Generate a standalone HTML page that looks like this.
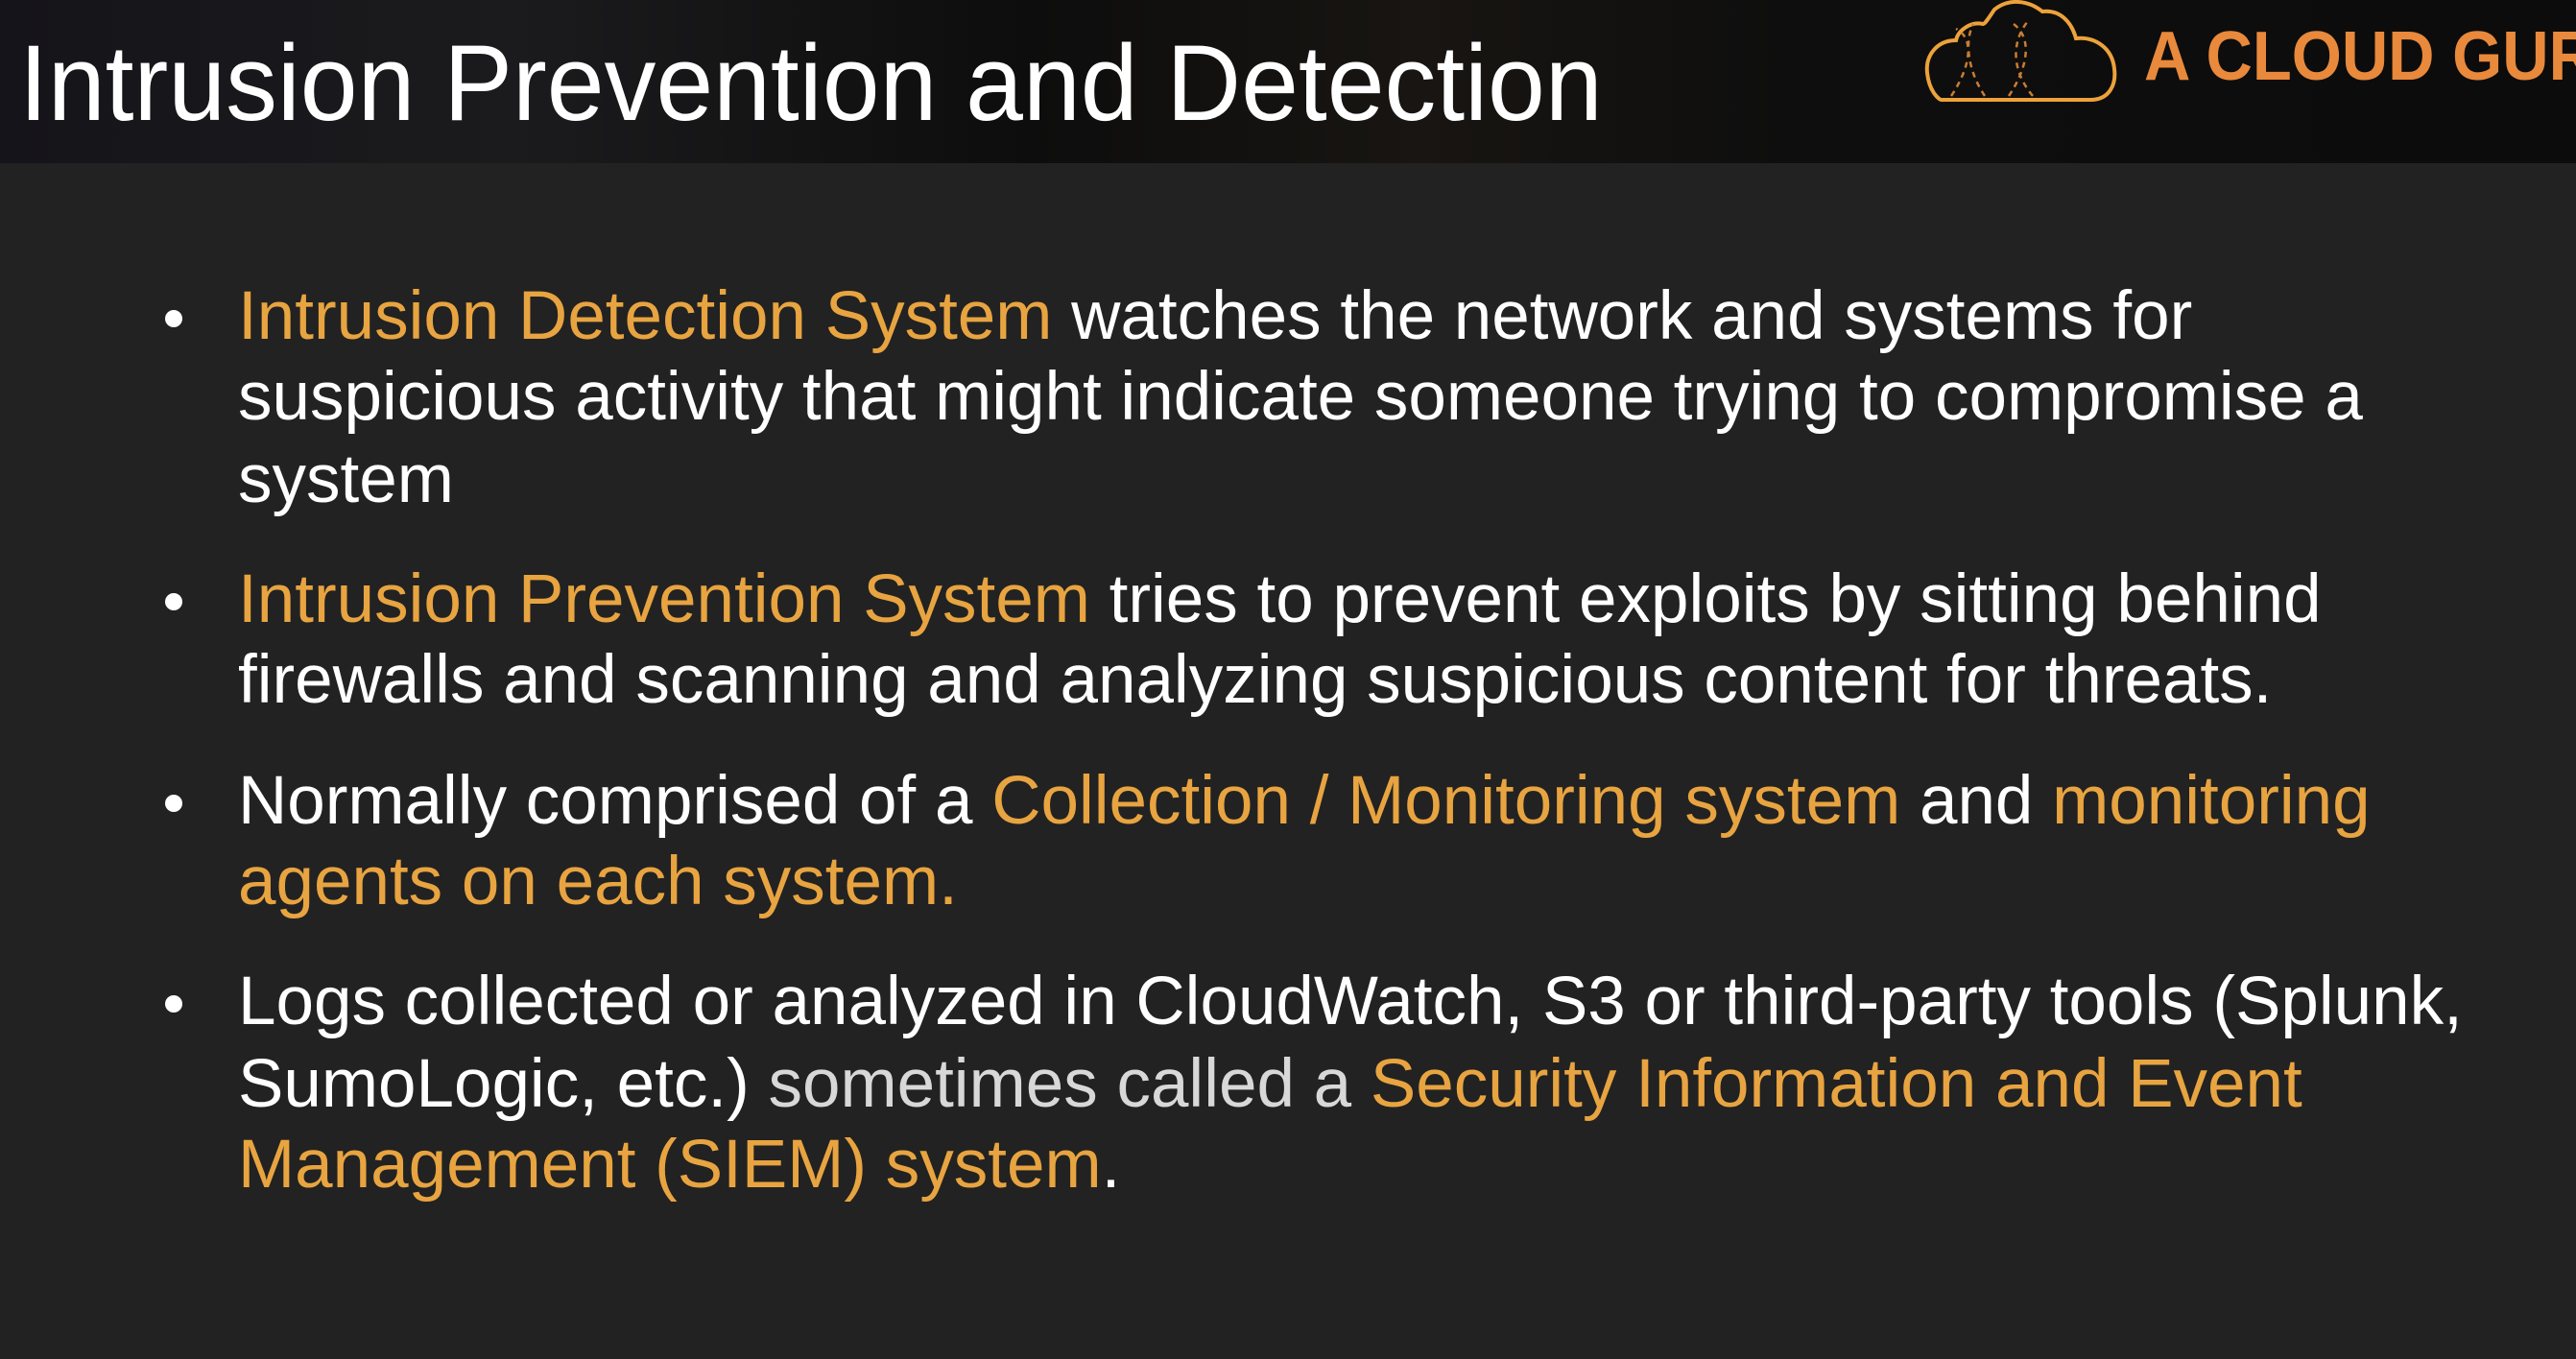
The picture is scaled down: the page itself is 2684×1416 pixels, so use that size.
<!DOCTYPE html>
<html><head><meta charset="utf-8"><style>
html,body{margin:0;padding:0;}
body{width:2684px;height:1416px;background:#222222;position:relative;overflow:hidden;font-family:"Liberation Sans",sans-serif;}
#hdr{position:absolute;left:0;top:0;width:2684px;height:170px;background:linear-gradient(90deg,#15141a 0%,#1b1b1d 20%,#0d0d0d 40%,#181512 55%,#0e0e0e 70%,#0c0c0c 100%);}
#title{position:absolute;left:20px;top:22px;font-size:112px;color:#fff;white-space:nowrap;transform-origin:0 0;transform:scaleX(0.96);line-height:130px;}
#brand{position:absolute;left:2234px;top:14px;font-size:72px;font-weight:bold;color:#e8893c;white-space:nowrap;line-height:90px;transform-origin:0 0;transform:scaleX(0.93);}
.l{position:absolute;left:248px;font-size:71px;color:#fff;white-space:nowrap;line-height:84px;transform-origin:0 0;}
.o{color:#e8a440;}
.g{color:#d8d8d8;}
.b{position:absolute;left:172px;width:18px;height:18px;border-radius:50%;background:#fff;}
</style></head><body>
<div id="hdr"></div>
<div id="title">Intrusion Prevention and Detection</div>
<svg style="position:absolute;left:1998px;top:0" width="210" height="110" viewBox="0 0 210 110">
<path d="M25 104 H180 C200 104 207 88 205 72 C203 50 185 38 165 40 C160 22 148 10 130 12 C115 0 95 -2 80 10 C72 22 70 25 68 25 C55 22 42 32 40 42 C20 42 8 58 10 76 C12 95 22 104 25 104 Z" fill="none" stroke="#eda23a" stroke-width="4"/>
<path d="M35 100 C55 70 60 40 40 30 M70 100 C50 70 50 40 58 25 M95 100 C115 70 120 40 100 25 M120 100 C95 70 100 40 115 22" fill="none" stroke="#c97d33" stroke-width="2.5" stroke-dasharray="6 5"/>
</svg>
<div id="brand">A CLOUD GURU</div>

<div class="b" style="top:323px"></div>
<div class="l" style="top:288px"><span class="o">Intrusion Detection System</span> watches the network and systems for</div>
<div class="l" style="top:372px">suspicious activity that might indicate someone trying to compromise a</div>
<div class="l" style="top:458px">system</div>

<div class="b" style="top:618px"></div>
<div class="l" style="top:583px"><span class="o">Intrusion Prevention System</span> tries to prevent exploits by sitting behind</div>
<div class="l" style="top:667px">firewalls and scanning and analyzing suspicious content for threats.</div>

<div class="b" style="top:828px"></div>
<div class="l" style="top:793px">Normally comprised of a <span class="o">Collection / Monitoring system</span> and <span class="o">monitoring</span></div>
<div class="l" style="top:877px"><span class="o">agents on each system.</span></div>

<div class="b" style="top:1037px"></div>
<div class="l" style="top:1002px">Logs collected or analyzed in CloudWatch, S3 or third-party tools (Splunk,</div>
<div class="l" style="top:1088px">SumoLogic, etc.) <span class="g">sometimes called a</span> <span class="o">Security Information and Event</span></div>
<div class="l" style="top:1172px"><span class="o">Management (SIEM) system</span>.</div>
</body></html>
